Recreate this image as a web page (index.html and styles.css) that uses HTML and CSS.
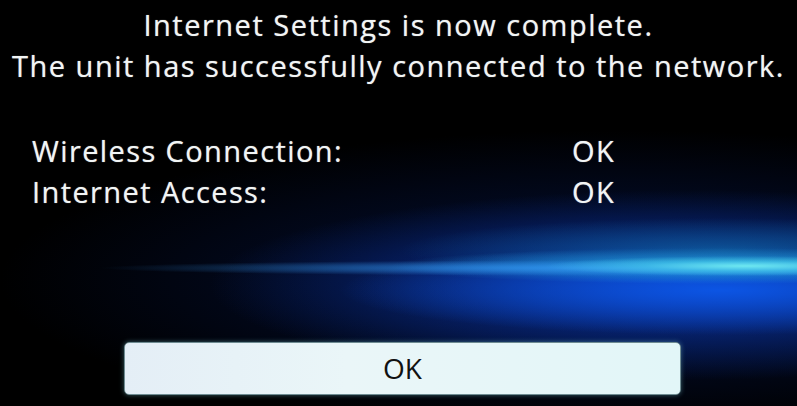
FILE: index.html
```html
<!DOCTYPE html>
<html lang="en">
<head>
<meta charset="utf-8">
<title>Internet Settings</title>
<link rel="stylesheet" href="styles.css">
</head>
<body>
<main class="screen">
  <header class="message">
    <p class="line">Internet Settings is now complete.</p>
    <p class="line">The unit has successfully connected to the network.</p>
  </header>
  <section class="status">
    <div class="row"><span class="label">Wireless Connection:</span><span class="value">OK</span></div>
    <div class="row"><span class="label">Internet Access:</span><span class="value">OK</span></div>
  </section>
  <div class="actions">
    <button class="ok-button" type="button">OK</button>
  </div>
</main>
</body>
</html>
```

FILE: styles.css
```css
html, body {
  margin: 0;
  padding: 0;
  background: #000;
}

.screen {
  width: 797px;
  height: 406px;
  overflow: hidden;
  display: flex;
  flex-direction: column;
  font-family: "Open Sans", "Noto Sans", sans-serif;
  color: #f2f5f5;
  background:
    radial-gradient(ellipse 200px 10px at 745px 266px, rgba(110, 232, 240, 1), rgba(70, 205, 232, 0.6) 50%, rgba(0, 0, 0, 0) 100%),
    radial-gradient(ellipse 540px 8px at 640px 268px, rgba(50, 150, 240, 0.9), rgba(0, 0, 0, 0) 100%),
    radial-gradient(ellipse 330px 18px at 720px 266px, rgba(40, 175, 230, 0.85), rgba(0, 0, 0, 0) 100%),
    radial-gradient(ellipse 320px 32px at 720px 250px, rgba(15, 100, 160, 0.7), rgba(0, 0, 0, 0) 100%),
    radial-gradient(ellipse 380px 45px at 720px 290px, rgba(12, 85, 228, 1), rgba(0, 0, 0, 0) 100%),
    radial-gradient(ellipse 480px 95px at 690px 285px, rgba(10, 55, 175, 0.95), rgba(0, 0, 0, 0) 100%),
    radial-gradient(ellipse 620px 150px at 620px 280px, rgba(4, 20, 70, 0.9), rgba(0, 0, 0, 0) 100%),
    #000;
}

.message {
  padding-top: 4px;
  text-align: center;
}

.line {
  margin: 0;
  font-size: 29px;
  line-height: 41px;
  letter-spacing: 1.5px;
  white-space: nowrap;
  text-shadow: 0 0 1px rgba(255, 255, 255, 0.6);
}

.status {
  margin-top: 44px;
  padding-left: 32px;
}

.row {
  display: flex;
  font-size: 29px;
  line-height: 41px;
  letter-spacing: 1.4px;
  text-shadow: 0 0 1px rgba(255, 255, 255, 0.6);
}

.label {
  width: 540px;
}

.actions {
  margin-top: 130px;
  padding-left: 124px;
}

.ok-button {
  width: 557px;
  height: 53px;
  border: 1px solid #6f8c92;
  border-radius: 5px;
  background: linear-gradient(90deg, #e4eef6 0%, #eaf6f8 40%, #e2f6f8 100%);
  box-shadow: 0 0 5px rgba(120, 200, 210, 0.45);
  font-family: "Open Sans", "Noto Sans", sans-serif;
  font-size: 28px;
  color: #111;
  padding: 0;
  line-height: 51px;
}
```
